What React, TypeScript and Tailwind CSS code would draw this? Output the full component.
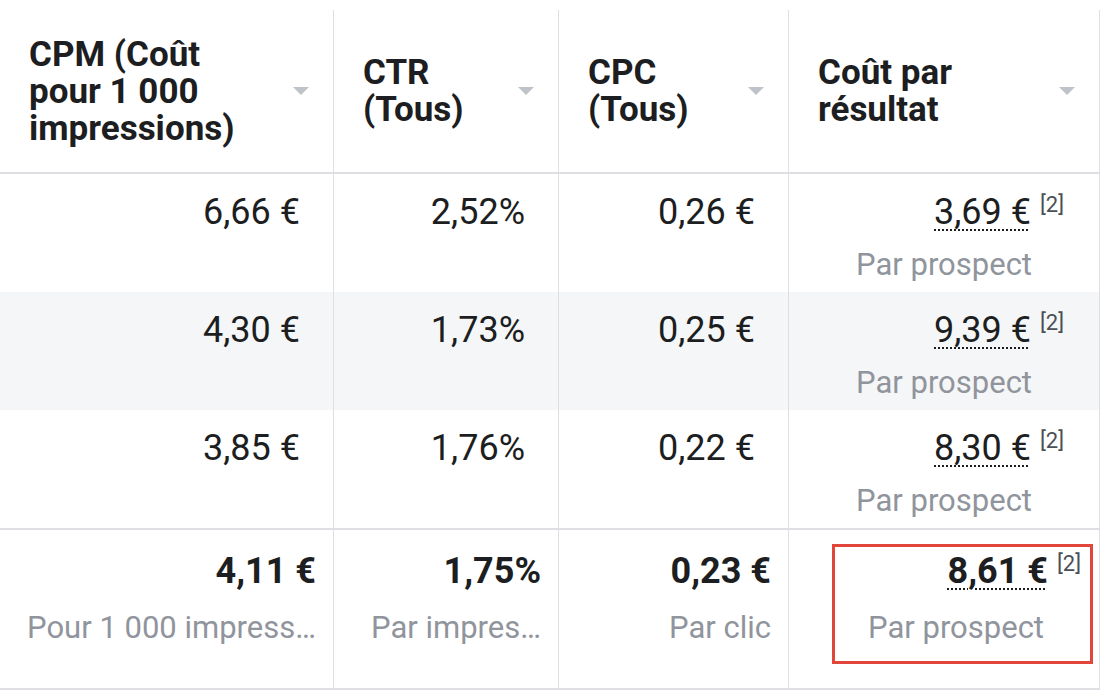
import { Fragment } from "react";

type Row = {
  cpm: string;
  ctr: string;
  cpc: string;
  cost: string;
  gray?: boolean;
};

const rows: Row[] = [
  { cpm: "6,66 €", ctr: "2,52%", cpc: "0,26 €", cost: "3,69 €" },
  { cpm: "4,30 €", ctr: "1,73%", cpc: "0,25 €", cost: "9,39 €", gray: true },
  { cpm: "3,85 €", ctr: "1,76%", cpc: "0,22 €", cost: "8,30 €" },
];

const widths = ["w-[334px]", "w-[225px]", "w-[230px]", "w-[311px]"];

const headers = [
  ["CPM (Coût", "pour 1 000", "impressions)"],
  ["CTR", "(Tous)"],
  ["CPC", "(Tous)"],
  ["Coût par", "résultat"],
];

const SortArrow = () => (
  <svg width="18" height="10" viewBox="0 0 18 10" className="shrink-0">
    <path d="M1 1h16l-8 8z" fill="#bec3c9" />
  </svg>
);

const App = () => {
  return (
    <div className="w-[1106px] h-[700px] bg-white overflow-hidden font-['Roboto',sans-serif] text-[#1c1e21]">
      {/* en-tête */}
      <div className="mt-[10px] flex h-[164px] w-[1100px] border-b-2 border-[#dddfe2]">
        {headers.map((lines, i) => (
          <div
            key={i}
            className={`${widths[i]} flex items-center justify-between border-r border-[#dddfe2] pl-[29px] pr-[23px]`}
          >
            <div className="text-[35px] font-bold leading-[37px]">
              {lines.map((l) => (
                <div key={l}>{l}</div>
              ))}
            </div>
            <SortArrow />
          </div>
        ))}
      </div>

      {/* lignes */}
      {rows.map((r, idx) => (
        <div
          key={idx}
          className={`flex h-[118px] w-[1100px] ${r.gray ? "bg-[#f5f6f7]" : "bg-white"}`}
        >
          {[r.cpm, r.ctr, r.cpc].map((v, i) => (
            <div
              key={i}
              className={`${widths[i]} border-r border-[#dddfe2] pr-[33px] pt-[17px] text-right text-[36px] leading-[42px] text-[#1c1e21]`}
            >
              {v}
            </div>
          ))}
          <div className="w-[311px] border-r border-[#dddfe2] pr-[35px] pt-[17px] flex flex-col items-end">
            <div className="flex items-start">
              <span className="text-[36px] leading-[42px] underline decoration-dotted decoration-2 underline-offset-[5px]">
                {r.cost}
              </span>
              <span className="ml-[9px] mt-[2px] text-[22px] leading-[24px] text-[#4b4f56]">[2]</span>
            </div>
            <div className="mr-[32px] mt-[14px] text-[31px] leading-[36px] text-[#90949c]">
              Par prospect
            </div>
          </div>
        </div>
      ))}

      {/* total */}
      <div className="flex h-[162px] w-[1100px] border-y-2 border-[#dddfe2]">
        {[
          ["4,11 €", "Pour 1 000 impress…"],
          ["1,75%", "Par impres…"],
          ["0,23 €", "Par clic"],
        ].map(([v, s], i) => (
          <Fragment key={i}>
            <div
              className={`${widths[i]} border-r border-[#dddfe2] pl-[29px] pr-[17px] pt-[20px] flex flex-col items-end`}
            >
              <div className="text-[36px] font-bold leading-[42px]">{v}</div>
              <div className="mt-[18px] text-[31px] leading-[36px] text-[#90949c] whitespace-nowrap">{s}</div>
            </div>
          </Fragment>
        ))}
        <div className="relative w-[311px] border-r border-[#dddfe2] pr-[18px] pt-[20px] flex flex-col items-end">
          <div className="flex items-start">
            <span className="text-[36px] font-bold leading-[42px] underline decoration-dotted decoration-2 underline-offset-[5px]">
              8,61 €
            </span>
            <span className="ml-[9px] mt-[2px] text-[22px] leading-[24px] text-[#4b4f56]">[2]</span>
          </div>
          <div className="mr-[37px] mt-[18px] text-[31px] leading-[36px] text-[#90949c]">Par prospect</div>
          <div className="absolute left-[43px] right-[6px] top-[14px] bottom-[24px] border-[3px] border-[#e2463a]" />
        </div>
      </div>
    </div>
  );
};

export default App;
